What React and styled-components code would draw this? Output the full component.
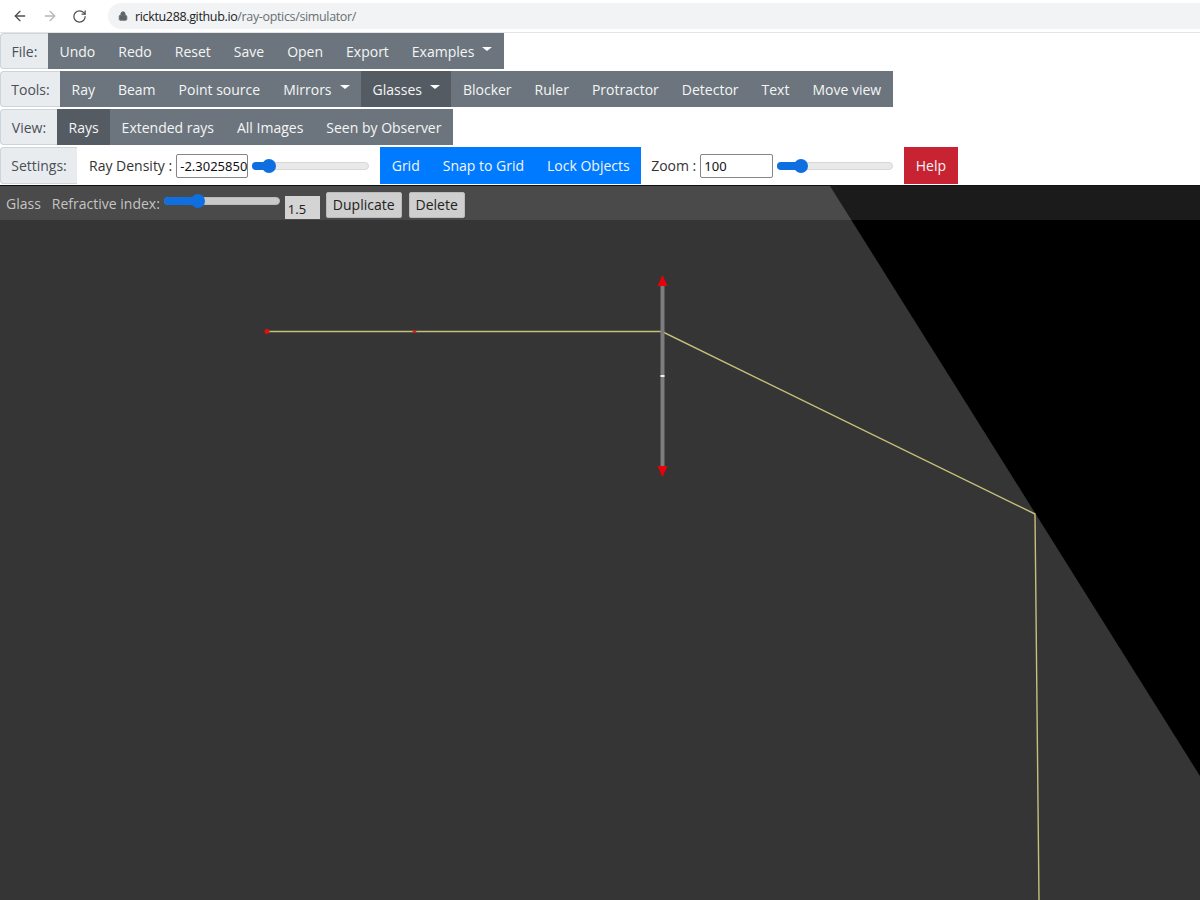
import React from 'react';
import styled, { createGlobalStyle } from 'styled-components';
import { ArrowLeft, ArrowRight, RotateCw, Lock } from 'lucide-react';

const Global = createGlobalStyle`
  html, body { margin: 0; padding: 0; background: #fff; }
  #root { width: 1200px; height: 900px; }
  * { box-sizing: border-box; }
`;
const Page = styled.div`
  width: 1200px; height: 900px; overflow: hidden; display: flex; flex-direction: column;
  font-family: "Open Sans", "Noto Sans", sans-serif; font-size: 14px; background: #fff;
`;
const BrowserBar = styled.div`
  height: 33px; flex: none; display: flex; align-items: center; padding: 0 0 0 12px; color: #5f6368;
  border-bottom: 1px solid #e4e4e4;
`;
const NavIcon = styled.span`
  display: flex; width: 16px; margin-right: 14px; color: ${p => p.$dim ? '#b5b7ba' : '#4d5054'};
`;
const Address = styled.div`
  flex: 1; height: 26px; margin-left: 6px; border-radius: 13px 0 0 13px; background: #f1f3f4;
  display: flex; align-items: center; padding-left: 10px; gap: 7px; font-size: 12.5px;
  letter-spacing: -0.35px; color: #6b6f73; font-family: "Open Sans", sans-serif;
`;
const Host = styled.span` color: #202124; `;
const Rows = styled.div`
  flex: none; display: flex; flex-direction: column; gap: 2px; height: 153px; border-bottom: 1px solid #111;
`;
const Row = styled.div`
  display: flex; height: ${p => p.$h || 36}px; align-items: stretch; flex: none;
`;
const Label = styled.div`
  width: ${p => p.$w}px; flex: none; display: flex; align-items: center; justify-content: center;
  background: #e9ecef; border: 1px solid #ced4da; border-right: 0; border-radius: 4px 0 0 4px;
  color: #495057; font-size: 14px;
`;
const Group = styled.div` display: flex; align-items: stretch; `;
const Btn = styled.div`
  display: flex; align-items: center; gap: 6px; padding: 0 ${p => p.$pad ?? 11.5}px; color: #f4f5f6; font-size: 14px; white-space: nowrap;
  background: ${p => p.$bg || '#6c757d'};
`;
const Caret = styled.span`
  width: 0; height: 0; border-left: 5px solid transparent; border-right: 5px solid transparent;
  border-top: 4px solid #fff; margin: 0 0 4px 2px;
`;
const Plain = styled.span`
  display: flex; align-items: center; white-space: nowrap; color: #333; font-size: 14px;
  margin: ${p => p.$m || '0'};
`;
const NumInput = styled.div`
  width: ${p => p.$w}px; height: 24px; align-self: center; border: 1px solid #858585; border-radius: 2px;
  background: #fff; color: #111; font-size: 13px; display: flex; align-items: center; padding-left: 3px;
  font-family: "Noto Sans", sans-serif; margin-left: 4px; overflow: hidden; white-space: nowrap;
`;
const Slider = styled.div`
  position: relative; width: ${p => p.$w}px; height: 8px; align-self: center; flex: none;
  background: ${p => p.$dark ? '#c9c9c9' : '#e9e9e9'}; border: 1px solid ${p => p.$dark ? '#bbb' : '#d8d8d8'}; border-radius: 4px;
  margin: ${p => p.$m || '0'};
`;
const Fill = styled.div`
  position: absolute; left: -1px; top: -1px; height: 8px; border-radius: 4px 0 0 4px; background: #0f6fe0;
  width: ${p => p.$w}px;
`;
const Thumb = styled.div`
  position: absolute; top: -4px; left: ${p => p.$x}px; width: 14px; height: 14px; border-radius: 50%; background: #0f6fe0;
`;
const Canvas = styled.div`
  position: relative; flex: 1; background: #353535; overflow: hidden;
`;
const Scene = styled.svg` display: block; width: 1200px; height: 714px; `;
const ObjBar = styled.div`
  position: absolute; left: 0; top: 0; right: 0; height: 34px; display: flex; align-items: center;
  background: rgba(255,255,255,0.105); color: #bdbdbd; font-size: 14px; padding-left: 6px;
`;
const ObjText = styled.span` margin-right: ${p => p.$mr || 0}px; color: #c4c4c4; white-space: nowrap; `;
const ObjInput = styled.div`
  width: 35px; height: 23px; margin: 9px 0 0 5px; background: #d4d4d4; color: #222; font-size: 13px; padding: 4px 0 0 3px;
  font-family: "Noto Sans", sans-serif;
`;
const ObjBtn = styled.div`
  height: 26px; margin: 3px 0 0 ${p => p.$ml}px; padding: 0 6px; background: #cfcfcf; color: #222; font-size: 14px;
  border: 1px solid #bbb; border-radius: 2px; display: flex; align-items: center;
`;

const Buttons = ({ items }) => items.map(i => (
  <Btn key={i.t} $bg={i.active ? '#545b62' : undefined}>{i.t}{i.caret && <Caret />}</Btn>
));

export default function App() {
  return (
    <Page>
      <Global />
      <BrowserBar>
        <NavIcon><ArrowLeft size={16} strokeWidth={2} /></NavIcon>
        <NavIcon $dim><ArrowRight size={16} strokeWidth={2} /></NavIcon>
        <NavIcon><RotateCw size={15} strokeWidth={2} /></NavIcon>
        <Address>
          <Lock size={10} fill="#5f6368" strokeWidth={2.4} />
          <span><Host>ricktu288.github.io</Host>/ray-optics/simulator/</span>
        </Address>
      </BrowserBar>
      <Rows>
        <Row>
          <Label $w={48}>File:</Label>
          <Group>
            <Buttons items={[{ t: 'Undo' }, { t: 'Redo' }, { t: 'Reset' }, { t: 'Save' }, { t: 'Open' }, { t: 'Export' }, { t: 'Examples', caret: true }]} />
          </Group>
        </Row>
        <Row>
          <Label $w={60}>Tools:</Label>
          <Group>
            <Buttons items={[{ t: 'Ray' }, { t: 'Beam' }, { t: 'Point source' }, { t: 'Mirrors', caret: true }, { t: 'Glasses', caret: true, active: true }, { t: 'Blocker' }, { t: 'Ruler' }, { t: 'Protractor' }, { t: 'Detector' }, { t: 'Text' }, { t: 'Move view' }]} />
          </Group>
        </Row>
        <Row>
          <Label $w={57}>View:</Label>
          <Group>
            <Buttons items={[{ t: 'Rays', active: true }, { t: 'Extended rays' }, { t: 'All Images' }, { t: 'Seen by Observer' }]} />
          </Group>
        </Row>
        <Row $h={37}>
          <Label $w={77}>Settings:</Label>
          <Plain $m="0 0 0 12px">Ray Density :</Plain>
          <NumInput $w={72}>-2.3025850</NumInput>
          <Slider $w={117} $m="0 0 0 4px"><Fill $w={20} /><Thumb $x={9} /></Slider>
          <Group style={undefined}>
            <Btn $bg="#007bff" style={{ marginLeft: 11 }}>Grid</Btn>
            <Btn $bg="#007bff">Snap to Grid</Btn>
            <Btn $bg="#007bff">Lock Objects</Btn>
          </Group>
          <Plain $m="0 0 0 10px">Zoom :</Plain>
          <NumInput $w={73}>100</NumInput>
          <Slider $w={116} $m="0 0 0 4px"><Fill $w={22} /><Thumb $x={16} /></Slider>
          <Btn $bg="#c82333" style={{ marginLeft: 11 }}>Help</Btn>
        </Row>
      </Rows>
      <Canvas>
        <Scene viewBox="0 186 1200 714">
          <polygon points="830,186 1200,186 1200,776" fill="#000" />
          <polyline points="267,331.5 662,331.5 1035,514 1039,900" fill="none" stroke="#c6c07a" strokeWidth="1.4" />
          <line x1="662.5" y1="284" x2="662.5" y2="468" stroke="#7d7d7d" strokeWidth="4" />
          <polygon points="662.5,275 667.5,286 657.5,286" fill="#e8000b" />
          <polygon points="662.5,477 667.5,466 657.5,466" fill="#e8000b" />
          <rect x="660.5" y="375" width="4" height="2" fill="#eee" />
          <circle cx="267" cy="331.5" r="2.5" fill="#e01010" />
          <circle cx="414.5" cy="331.5" r="1.8" fill="#c82020" />
        </Scene>
        <ObjBar>
          <ObjText $mr={11}>Glass</ObjText>
          <ObjText>Refractive index:</ObjText>
          <Slider $dark $w={116} $m="-5px 0 0 4px"><Fill $w={34} /><Thumb $x={26} /></Slider>
          <ObjInput>1.5</ObjInput>
          <ObjBtn $ml={6}>Duplicate</ObjBtn>
          <ObjBtn $ml={7}>Delete</ObjBtn>
        </ObjBar>
      </Canvas>
    </Page>
  );
}
